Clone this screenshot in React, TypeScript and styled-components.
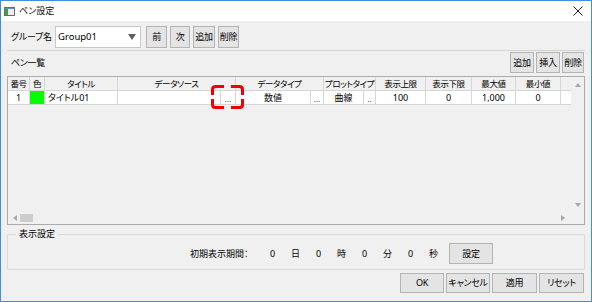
import React from 'react'
import styled, { createGlobalStyle } from 'styled-components'

type Column = {
  label: string
  width: number
}

const columns: Column[] = [
  { label: '番号', width: 22 },
  { label: '色', width: 15 },
  { label: 'タイトル', width: 73 },
  { label: 'データソース', width: 118 },
  { label: 'データタイプ', width: 88 },
  { label: 'プロットタイプ', width: 52 },
  { label: '表示上限', width: 50 },
  { label: '表示下限', width: 46 },
  { label: '最大値', width: 44 },
  { label: '最小値', width: 45 },
]

const gridTemplate = columns.map((c) => `${c.width}px`).join(' ') + ' 1fr'

const period = [
  { value: '0', unit: '日' },
  { value: '0', unit: '時' },
  { value: '0', unit: '分' },
  { value: '0', unit: '秒' },
]

function Arrow({ dir }: { dir: 'up' | 'down' | 'left' | 'right' }) {
  const points = {
    up: '0,4 3,0 6,4',
    down: '0,0 6,0 3,4',
    left: '4,0 4,6 0,3',
    right: '0,0 0,6 4,3',
  }[dir]
  const vertical = dir === 'up' || dir === 'down'
  return (
    <svg width={vertical ? 6 : 4} height={vertical ? 4 : 6}>
      <polygon points={points} fill="#a6a6a6" />
    </svg>
  )
}

function App() {
  return (
    <>
      <GlobalStyle />
      <Window>
        <TitleBar>
          <svg width="11" height="9" viewBox="0 0 11 9">
            <rect x="0.5" y="0.5" width="10" height="8" fill="#e8eef2" stroke="#6b6b6b" />
            <rect x="1" y="2" width="3" height="6" fill="#3ca23c" />
            <rect x="1" y="1" width="9" height="1" fill="#5a8fbf" />
          </svg>
          <TitleText>ペン設定</TitleText>
          <CloseBox>
            <svg width="10" height="10" viewBox="0 0 10 10">
              <path d="M0.5 0.5 L9.5 9.5 M9.5 0.5 L0.5 9.5" stroke="#222" strokeWidth="1" />
            </svg>
          </CloseBox>
        </TitleBar>

        <Body>
          <GroupRow>
            <FieldLabel>グループ名</FieldLabel>
            <Combo>
              <span>Group01</span>
              <svg width="8" height="6" viewBox="0 0 8 6">
                <polygon points="0,0 8,0 4,6" fill="#606060" />
              </svg>
            </Combo>
            <ButtonSet $gap={3}>
              <Button $w={21} $h={22}>前</Button>
              <Button $w={20} $h={22}>次</Button>
              <Button $w={22} $h={22}>追加</Button>
              <Button $w={21} $h={22}>削除</Button>
            </ButtonSet>
          </GroupRow>

          <Separator />

          <ListHeader>
            <FieldLabel>ペン一覧</FieldLabel>
            <ButtonSet $gap={2}>
              <Button $w={24} $h={21}>追加</Button>
              <Button $w={24} $h={21}>挿入</Button>
              <Button $w={22} $h={21}>削除</Button>
            </ButtonSet>
          </ListHeader>

          <TableFrame>
            <GridArea>
              <GridRow>
                {columns.map((c) => (
                  <HeaderCell key={c.label}>{c.label}</HeaderCell>
                ))}
                <HeaderCell />
              </GridRow>
              <GridRow>
                <DataCell>1</DataCell>
                <ColorCell $color="#00ff00" />
                <DataCell $align="left">タイトル01</DataCell>
                <DataCell>
                  <CellValue />
                  <EllipsisButton $w={15}>
                    ...
                    <Highlight width="33" height="24" viewBox="0 0 33 24">
                      <path
                        d="M1.5 10 V4.5 Q1.5 1.5 4.5 1.5 H13 M20 1.5 H28.5 Q31.5 1.5 31.5 4.5 V10 M31.5 14 V19.5 Q31.5 22.5 28.5 22.5 H20 M13 22.5 H4.5 Q1.5 22.5 1.5 19.5 V14"
                        fill="none"
                        stroke="#f00000"
                        strokeWidth="3"
                      />
                    </Highlight>
                  </EllipsisButton>
                </DataCell>
                <DataCell>
                  <CellValue>数値</CellValue>
                  <EllipsisButton $w={13}>...</EllipsisButton>
                </DataCell>
                <DataCell>
                  <CellValue>曲線</CellValue>
                  <EllipsisButton $w={12}>..</EllipsisButton>
                </DataCell>
                <DataCell>100</DataCell>
                <DataCell>0</DataCell>
                <DataCell>1,000</DataCell>
                <DataCell>0</DataCell>
                <DataCell $last />
              </GridRow>
            </GridArea>
            <VScroll>
              <Arrow dir="up" />
              <Arrow dir="down" />
            </VScroll>
            <HScroll>
              <Arrow dir="left" />
              <Thumb />
              <HScrollEnd>
                <Arrow dir="right" />
              </HScrollEnd>
            </HScroll>
            <ScrollCorner />
          </TableFrame>

          <DisplayGroup>
            <Legend>表示設定</Legend>
            <PeriodRow>
              <PeriodLabel>初期表示期間：</PeriodLabel>
              {period.map((p) => (
                <React.Fragment key={p.unit}>
                  <Slot>{p.value}</Slot>
                  <Slot>{p.unit}</Slot>
                </React.Fragment>
              ))}
              <Button $w={44} $h={21} style={{ marginLeft: 4 }}>設定</Button>
            </PeriodRow>
          </DisplayGroup>

          <DialogButtons>
            <Button $w={44} $h={20}>OK</Button>
            <Button $w={44} $h={20}>キャンセル</Button>
            <Button $w={45} $h={20}>適用</Button>
            <Button $w={45} $h={20}>リセット</Button>
          </DialogButtons>
        </Body>
      </Window>
    </>
  )
}

const GlobalStyle = createGlobalStyle`
  body {
    margin: 0;
    font-family: "Noto Sans", "Noto Sans CJK JP", sans-serif;
    font-size: 9px;
    line-height: 12px;
    color: #000;
    font-feature-settings: "palt";
  }
`

const Window = styled.div`
  width: 592px;
  height: 302px;
  box-sizing: border-box;
  border: 1px solid #3f8fdc;
  background: #f0f0f0;
  display: flex;
  flex-direction: column;
`

const TitleBar = styled.div`
  height: 20px;
  background: #fff;
  display: flex;
  align-items: center;
  padding-left: 3px;
`

const TitleText = styled.span`
  margin-left: 4px;
  color: #111;
`

const CloseBox = styled.div`
  margin-left: auto;
  margin-right: 8px;
  display: flex;
`

const Body = styled.div`
  flex: 1;
  display: flex;
  flex-direction: column;
  padding: 0 6px;
`

const GroupRow = styled.div`
  display: flex;
  align-items: center;
  height: 23px;
  margin-top: 4px;
`

const FieldLabel = styled.span`
  width: 44px;
  padding-left: 4px;
  letter-spacing: -0.3px;
`

const Combo = styled.div`
  width: 86px;
  height: 22px;
  box-sizing: border-box;
  background: #fff;
  border: 1px solid #c8c8c8;
  display: flex;
  align-items: center;
  justify-content: space-between;
  padding: 0 4px 0 2px;
  font-size: 9.5px;
`

const ButtonSet = styled.div<{ $gap: number }>`
  display: flex;
  gap: ${(p) => p.$gap}px;
  margin-left: 5px;
`

const Button = styled.button<{ $w: number; $h: number }>`
  width: ${(p) => p.$w}px;
  height: ${(p) => p.$h}px;
  padding: 0;
  background: #e4e4e4;
  border: 1px solid #b4b4b4;
  font: inherit;
  letter-spacing: -0.3px;
  color: #000;
  white-space: nowrap;
  overflow: hidden;
`

const Separator = styled.div`
  margin-top: 2px;
  border-top: 1px solid #d2d2d2;
`

const ListHeader = styled.div`
  display: flex;
  align-items: center;
  justify-content: space-between;
  height: 21px;
  margin-top: 1px;
  padding-right: 1px;
`

const TableFrame = styled.div`
  margin-top: 3px;
  height: 149px;
  box-sizing: border-box;
  border: 1px solid #ababab;
  display: grid;
  grid-template-columns: 1fr 13px;
  grid-template-rows: 1fr 12px;
`

const GridArea = styled.div`
  display: flex;
  flex-direction: column;
`

const GridRow = styled.div`
  display: grid;
  grid-template-columns: ${gridTemplate};
  height: 14px;
`

const HeaderCell = styled.div`
  box-sizing: border-box;
  border-right: 1px solid #d6d6d6;
  border-bottom: 1px solid #d6d6d6;
  background: #f0f0f0;
  display: flex;
  align-items: center;
  justify-content: center;
  font-size: 8.5px;
  letter-spacing: -0.4px;
  white-space: nowrap;
  &:last-child {
    border-right: none;
  }
`

const DataCell = styled.div<{ $align?: 'left'; $last?: boolean }>`
  box-sizing: border-box;
  border-right: ${(p) => (p.$last ? 'none' : '1px solid #d6d6d6')};
  border-bottom: 1px solid #d6d6d6;
  background: #fff;
  display: flex;
  align-items: center;
  justify-content: ${(p) => (p.$align === 'left' ? 'flex-start' : 'center')};
  padding-left: ${(p) => (p.$align === 'left' ? '3px' : '0')};
  white-space: nowrap;
`

const ColorCell = styled.div<{ $color: string }>`
  box-sizing: border-box;
  border-right: 1px solid #d6d6d6;
  border-bottom: 1px solid #d6d6d6;
  background: ${(p) => p.$color};
`

const CellValue = styled.span`
  flex: 1;
  text-align: center;
`

const EllipsisButton = styled.span<{ $w: number }>`
  position: relative;
  width: ${(p) => p.$w}px;
  height: 100%;
  box-sizing: border-box;
  border-left: 1px solid #d6d6d6;
  display: flex;
  align-items: flex-end;
  justify-content: center;
  font-size: 8px;
  line-height: 11px;
  color: #444;
`

const Highlight = styled.svg`
  position: absolute;
  left: -10px;
  top: -6px;
`

const VScroll = styled.div`
  grid-row: 1;
  grid-column: 2;
  display: flex;
  flex-direction: column;
  align-items: center;
  justify-content: space-between;
  padding: 6px 0 5px;
`

const HScroll = styled.div`
  grid-row: 2;
  grid-column: 1;
  display: flex;
  align-items: center;
  padding: 0 0 0 5px;
`

const Thumb = styled.div`
  width: 13px;
  height: 8px;
  margin-left: 3px;
  background: #cdcdcd;
`

const HScrollEnd = styled.div`
  margin-left: auto;
  margin-right: 6px;
  display: flex;
`

const ScrollCorner = styled.div`
  grid-row: 2;
  grid-column: 2;
`

const DisplayGroup = styled.fieldset`
  margin: 3px 0 0;
  padding: 0;
  min-width: 0;
  border: 1px solid #d8d8d8;
  border-radius: 2px;
`

const Legend = styled.legend`
  margin-left: 8px;
  padding: 0 3px;
  line-height: 12px;
`

const PeriodRow = styled.div`
  display: flex;
  align-items: center;
  height: 21px;
  margin: 3px 0 5px;
  padding-left: 182px;
`

const PeriodLabel = styled.span`
  width: 71px;
  white-space: nowrap;
`

const Slot = styled.span`
  width: 23px;
  text-align: center;
`

const DialogButtons = styled.div`
  display: flex;
  justify-content: flex-end;
  gap: 2px;
  margin-top: 3px;
  padding-right: 1px;
`

export default App
